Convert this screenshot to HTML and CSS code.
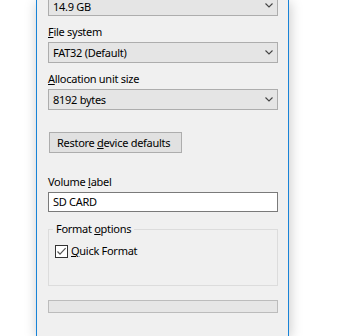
FILE: index.html
```html
<!DOCTYPE html>
<html>
<head>
<meta charset="utf-8">
<link rel="stylesheet" href="styles.css">
</head>
<body>
<div class="window">
  <div class="content">
    <div class="select first"><span class="val">14.9 GB</span><svg class="chev" width="8" height="5" viewBox="0 0 8 5"><path d="M0.5 0.5 L4 4 L7.5 0.5" fill="none" stroke="#444" stroke-width="1.1"/></svg></div>
    <div class="label"><u>F</u>ile system</div>
    <div class="select"><span class="val">FAT32 (Default)</span><svg class="chev" width="8" height="5" viewBox="0 0 8 5"><path d="M0.5 0.5 L4 4 L7.5 0.5" fill="none" stroke="#444" stroke-width="1.1"/></svg></div>
    <div class="label"><u>A</u>llocation unit size</div>
    <div class="select"><span class="val">8192 bytes</span><svg class="chev" width="8" height="5" viewBox="0 0 8 5"><path d="M0.5 0.5 L4 4 L7.5 0.5" fill="none" stroke="#444" stroke-width="1.1"/></svg></div>
    <button class="btn">Restore <u>d</u>evice defaults</button>
    <div class="label vol">Volume <u>l</u>abel</div>
    <div class="input">SD CARD</div>
    <fieldset class="group">
      <legend>Format <u>o</u>ptions</legend>
      <div class="check"><span class="box"><svg width="11" height="11" viewBox="0 0 11 11"><path d="M1.5 5.5 L4 8.2 L9.6 2.2" fill="none" stroke="#555" stroke-width="1.2"/></svg></span><span class="ctext"><u>Q</u>uick Format</span></div>
    </fieldset>
    <div class="progress"></div>
  </div>
</div>
</body>
</html>
```
FILE: styles.css
```css
html, body {
  margin: 0;
  padding: 0;
  background: #ffffff;
  overflow: hidden;
  height: 336px;
}
body {
  font-family: "Noto Sans", "Liberation Sans", sans-serif;
  font-size: 11px;
  letter-spacing: -0.28px;
  color: #000;
}
.window {
  margin-left: 36px;
  width: 253px;
  height: 336px;
  box-sizing: border-box;
  background: #f0f0f0;
  border-left: 1px solid #1883d7;
  border-right: 1px solid #1883d7;
  box-shadow: 1px 2px 12px rgba(0, 0, 0, 0.22);
  overflow: hidden;
}
.content {
  padding: 0 10px 0 11px;
  display: flex;
  flex-direction: column;
  align-items: flex-start;
}
.select {
  width: 230px;
  height: 21px;
  box-sizing: border-box;
  border: 1px solid #adadad;
  background: #e5e5e5;
  display: flex;
  align-items: center;
  justify-content: space-between;
  padding: 0 4px 0 4px;
  line-height: 13px;
}
.select.first {
  margin-top: -5px;
}
.select.first .val {
  position: relative;
  top: 1px;
}
.chev {
  display: block;
}
.label {
  margin-top: 8px;
  margin-bottom: 2px;
  line-height: 16px;
  height: 16px;
}
.label.vol {
  margin-top: 21px;
}
.btn {
  margin: 22px 0 0 1px;
  width: 133px;
  height: 21px;
  box-sizing: border-box;
  border: 1px solid #adadad;
  background: #e1e1e1;
  font: inherit;
  letter-spacing: inherit;
  color: #000;
  padding: 0 0 0 7px;
  text-align: left;
  line-height: 16px;
}
.input {
  width: 230px;
  height: 20px;
  box-sizing: border-box;
  border: 1px solid #7a7a7a;
  background: #fff;
  padding: 0 4px;
  line-height: 18px;
}
.group {
  margin: 9px 0 0 0;
  width: 230px;
  box-sizing: border-box;
  border: 1px solid #dcdcdc;
  padding: 0 4px 26px 4px;
  min-inline-size: 0;
}
.group legend {
  padding: 0 3px;
  line-height: 16px;
}
.check {
  margin: 6px 0 0 2px;
  display: flex;
  align-items: center;
  height: 16px;
}
.box {
  width: 13px;
  height: 13px;
  box-sizing: border-box;
  border: 1px solid #333;
  background: #fff;
  display: flex;
  align-items: center;
  justify-content: center;
}
.box svg {
  display: block;
}
.ctext {
  margin-left: 3px;
  line-height: 16px;
}
.progress {
  margin-top: 14px;
  width: 230px;
  height: 13px;
  box-sizing: border-box;
  border: 1px solid #bcbcbc;
  background: #e6e6e6;
}
```
